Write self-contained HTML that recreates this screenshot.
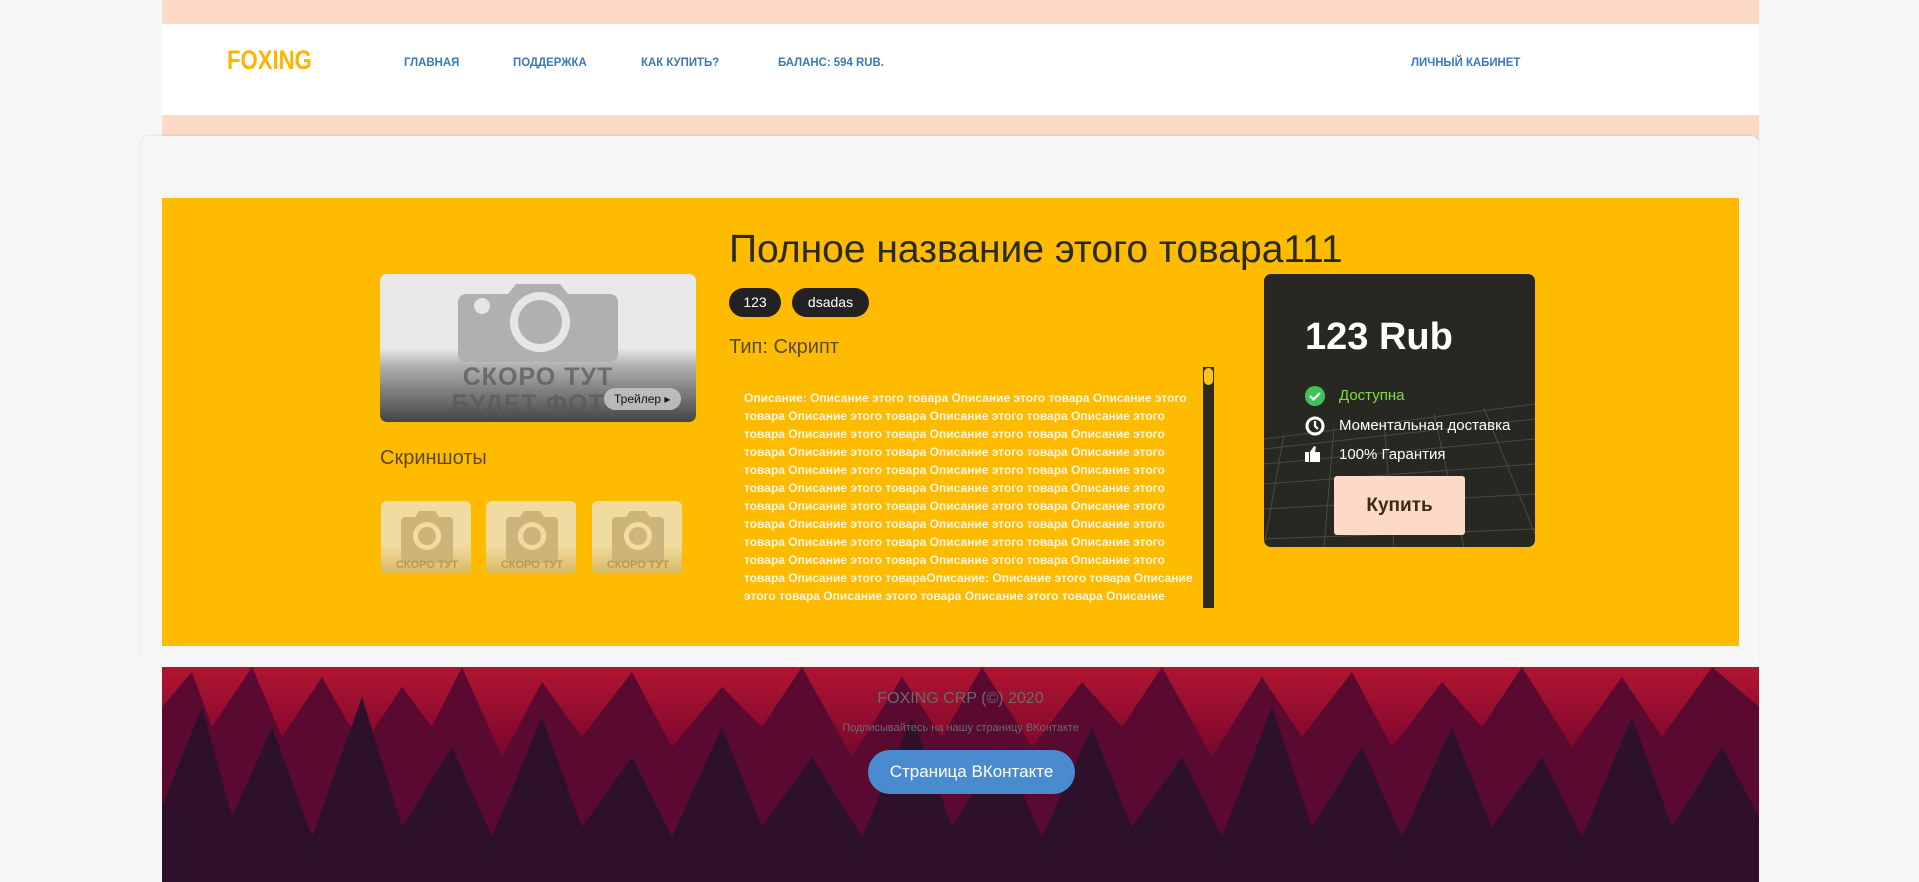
<!DOCTYPE html>
<html><head><meta charset="utf-8"><style>
*{margin:0;padding:0;box-sizing:border-box}
body{width:1919px;height:882px;background:#f6f6f6;font-family:"Liberation Sans",sans-serif;position:relative;overflow:hidden}
.a{position:absolute}
.nav{color:#3a78b8;font-size:12px;font-weight:bold;top:55px;transform:scaleX(.95);transform-origin:left}
.desc div{white-space:nowrap;height:18px;line-height:18px}
.thumb{position:absolute;top:501px;width:90px;height:73px;border-radius:6px;background:linear-gradient(#f0dca0 60%,#d9b860);overflow:hidden}
</style></head><body>
<div class="a" style="left:162px;top:0;width:1597px;height:140px;background:#fcdac6"></div>
<div class="a" style="left:162px;top:24px;width:1597px;height:91px;background:#fff"></div>
<div class="a" style="left:227px;top:45px;font-size:27px;font-weight:bold;color:#ffb400;transform:scaleX(.82);transform-origin:left">FOXING</div>
<div class="a nav" style="left:404px">ГЛАВНАЯ</div>
<div class="a nav" style="left:513px">ПОДДЕРЖКА</div>
<div class="a nav" style="left:641px">КАК КУПИТЬ?</div>
<div class="a nav" style="left:778px">БАЛАНС: 594 RUB.</div>
<div class="a nav" style="left:1411px">ЛИЧНЫЙ КАБИНЕТ</div>

<div class="a" style="left:141px;top:136px;width:1618px;height:531px;background:#f6f6f6;border-radius:8px;box-shadow:0 -1px 2px rgba(0,0,0,.08)"></div>
<div class="a" style="left:162px;top:198px;width:1577px;height:448px;background:#ffbb00"></div>

<div class="a" style="left:380px;top:274px;width:316px;height:148px;border-radius:7px;overflow:hidden;background:linear-gradient(#e9e9e9 0,#e9e9e9 50%,#b0b0b0 62%,#444 100%)">
<svg class="a" style="left:76px;top:8px" width="164" height="80" viewBox="0 0 164 80"><path d="M10 12h42l8-10h44l8 10h42a8 8 0 0 1 8 8v52a8 8 0 0 1-8 8H10a8 8 0 0 1-8-8V20a8 8 0 0 1 8-8z" fill="#b0b0b0"/><circle cx="84" cy="40" r="30" fill="#e6e6e6"/><circle cx="84" cy="40" r="22" fill="#b0b0b0"/><circle cx="26" cy="24" r="8" fill="#e6e6e6"/></svg>
<div class="a" style="left:0;width:316px;top:90px;text-align:center;font-size:25px;font-weight:bold;color:rgba(90,90,90,.75);line-height:27px;letter-spacing:1px">СКОРО ТУТ<br>БУДЕТ ФОТО</div>
<div class="a" style="left:224px;top:114px;width:77px;height:22px;border-radius:11px;background:rgba(200,200,200,.85);font-size:12px;line-height:22px;padding-left:10px;color:#111">Трейлер ▸</div>
</div>

<div class="a" style="left:380px;top:447px;font-size:20px;color:#5a4a20;font-weight:300">Скриншоты</div>
<div class="thumb" style="left:381px"></div>
<div class="thumb" style="left:486px"></div>
<div class="thumb" style="left:592px"></div>
<svg class="a" style="left:381px;top:505px" width="300" height="70"><g fill="#cdb57a"><g id="c"><path d="M24 12h10l4-6h16l4 6h10a4 4 0 0 1 4 4v38a4 4 0 0 1-4 4H24a4 4 0 0 1-4-4V16a4 4 0 0 1 4-4z"/><circle cx="46" cy="31" r="14" fill="#f0dca0"/><circle cx="46" cy="31" r="9"/><text x="46" y="63" font-size="11" font-weight="bold" font-family="Liberation Sans" text-anchor="middle" fill="#b89b50">СКОРО ТУТ</text></g><use href="#c" x="105"/><use href="#c" x="211"/></g></svg>

<div class="a" style="left:729px;top:228px;font-size:39px;color:#2a2a1f;font-weight:300">Полное название этого товара111</div>
<div class="a" style="left:729px;top:288px;width:52px;height:29px;border-radius:15px;background:#222;color:#fff;font-size:14px;line-height:29px;text-align:center">123</div>
<div class="a" style="left:792px;top:288px;width:77px;height:29px;border-radius:15px;background:#222;color:#fff;font-size:14px;line-height:29px;text-align:center">dsadas</div>
<div class="a" style="left:729px;top:336px;font-size:20px;color:#5a4a20;font-weight:300">Тип: Скрипт</div>

<div class="a desc" style="left:744px;top:389px;font-size:12px;font-weight:bold;color:#fff5dc">
<div>Описание: Описание этого товара Описание этого товара Описание этого</div>
<div>товара Описание этого товара Описание этого товара Описание этого</div>
<div>товара Описание этого товара Описание этого товара Описание этого</div>
<div>товара Описание этого товара Описание этого товара Описание этого</div>
<div>товара Описание этого товара Описание этого товара Описание этого</div>
<div>товара Описание этого товара Описание этого товара Описание этого</div>
<div>товара Описание этого товара Описание этого товара Описание этого</div>
<div>товара Описание этого товара Описание этого товара Описание этого</div>
<div>товара Описание этого товара Описание этого товара Описание этого</div>
<div>товара Описание этого товара Описание этого товара Описание этого</div>
<div>товара Описание этого товараОписание: Описание этого товара Описание</div>
<div>этого товара Описание этого товара Описание этого товара Описание</div>
</div>
<div class="a" style="left:1203px;top:367px;width:11px;height:241px;background:#2e2a20"></div>
<div class="a" style="left:1204px;top:368px;width:9px;height:17px;border-radius:5px;background:#ffc21a"></div>

<div class="a" style="left:1264px;top:274px;width:271px;height:273px;border-radius:7px;background:#282822;overflow:hidden">
<svg class="a" style="left:0;top:120px" width="271" height="153"><g stroke="#4a4a42" stroke-width="1" fill="none"><path d="M0 45 L271 10"/><path d="M0 55 L271 25"/><path d="M0 70 L271 45"/><path d="M0 90 L271 70"/><path d="M0 115 L271 100"/><path d="M0 145 L271 135"/><path d="M20 40 L0 153"/><path d="M70 34 L60 153"/><path d="M120 27 L130 153"/><path d="M170 20 L200 153"/><path d="M220 14 L271 140"/></g></svg>
<div class="a" style="left:41px;top:42px;font-size:38px;font-weight:bold;color:#fff">123 Rub</div>
<svg class="a" style="left:41px;top:112px" width="20" height="20"><circle cx="10" cy="10" r="10" fill="#3cc45a"/><path d="M5 10l3.5 3.5L15 7" stroke="#fff" stroke-width="2.2" fill="none"/></svg>
<div class="a" style="left:75px;top:113px;font-size:15px;color:#7ae040">Доступна</div>
<svg class="a" style="left:41px;top:142px" width="20" height="20"><circle cx="10" cy="10" r="8" stroke="#fff" stroke-width="3" fill="none"/><path d="M10 5v5l3 3" stroke="#fff" stroke-width="2.2" fill="none"/></svg>
<div class="a" style="left:75px;top:143px;font-size:15px;color:#fff">Моментальная доставка</div>
<svg class="a" style="left:41px;top:172px" width="16" height="16"><rect x="0" y="6" width="4" height="10" fill="#fff"/><path d="M5 6l4-6 2 1-1 5h5v10H5z" fill="#fff"/></svg>
<div class="a" style="left:75px;top:172px;font-size:15px;color:#fff">100% Гарантия</div>
<div class="a" style="left:70px;top:202px;width:131px;height:59px;border-radius:3px;background:#fddac5;color:#3a2a1a;font-size:19px;font-weight:bold;text-align:center;line-height:59px">Купить</div>
</div>

<div class="a" style="left:162px;top:667px;width:1597px;height:215px;overflow:hidden;background:linear-gradient(#b01530 0,#8a0a2e 30%,#5a0a2c 55%,#2d1029 75%)">
<svg class="a" style="left:0;top:0" width="1597" height="215"><g fill="#5a0a30"><path d="M0 40L30 5 50 60 90 0 120 70 160 10 200 80 240 20 270 60 300 0 340 90 380 15 420 70 470 5 510 80 560 20 600 60 640 0 690 90 740 10 780 70 820 0 870 80 920 15 960 60 1000 0 1050 90 1100 10 1140 70 1190 5 1230 80 1280 15 1320 60 1360 0 1410 80 1460 10 1500 70 1550 0 1597 40V215H0z"/></g><g fill="#2d1029"><path d="M0 140L40 40 70 150 110 60 150 170 200 30 240 160 290 80 330 170 380 50 420 160 470 90 510 170 560 60 600 160 650 90 700 170 750 50 790 160 840 80 880 170 930 60 970 160 1020 90 1060 170 1110 40 1150 160 1200 80 1240 170 1290 60 1330 160 1380 90 1420 170 1470 50 1510 160 1560 80 1597 150V215H0z"/></g></svg>
<div class="a" style="left:0;width:1597px;top:23px;text-align:center;font-size:16px;color:#6b6b6b">FOXING CRP (©) 2020</div>
<div class="a" style="left:0;width:1597px;top:55px;text-align:center;font-size:11px;color:#6b6b6b">Подписывайтесь на нашу страницу ВКонтакте</div>
<div class="a" style="left:706px;top:83px;width:207px;height:44px;border-radius:22px;background:#4a8bd0;color:#fff;font-size:17px;line-height:44px;text-align:center">Страница ВКонтакте</div>
</div>
</body></html>
